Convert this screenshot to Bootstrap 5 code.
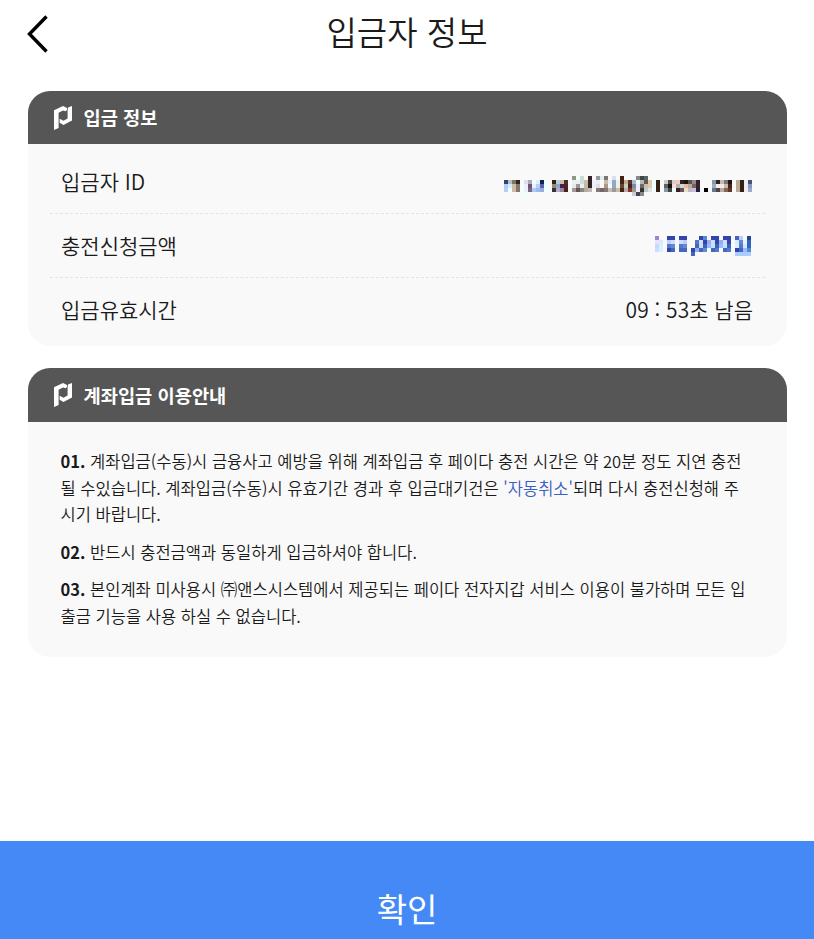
<!DOCTYPE html>
<html lang="ko">
<head>
  <meta charset="UTF-8" />
  <meta name="viewport" content="width=device-width, initial-scale=1" />
  <title>입금자 정보</title>
  <link href="https://cdn.jsdelivr.net/npm/bootstrap@5.3.3/dist/css/bootstrap.min.css" rel="stylesheet" />
  <style>
    body {
      font-family: "Noto Sans CJK KR", "Noto Sans", sans-serif;
      color: #1a1a1a;
      font-weight: 350;
    }
    .page-top {
      height: 91px;
      padding: 0 27px;
    }
    .page-title {
      font-size: 33px;
      line-height: 50px;
      padding-top: 6px;
      font-weight: 350;
    }
    .back-btn {
      width: 21px;
      padding-top: 15px;
    }
    .info-card {
      margin: 0 27px 22px 28px;
      border-radius: 22px;
      background: #f9f9f9;
    }
    .info-head {
      background: #565656;
      height: 53px;
      padding: 0 25.5px;
      font-size: 18.7px;
      font-weight: 700;
    }
    .guide-head {
      height: 54px;
    }
    .info-rows {
      padding: 5px 22px;
    }
    .info-row {
      height: 64px;
      padding: 0 12px 0 11px;
      font-size: 21px;
    }
    .info-row:first-child {
      padding-top: 2px;
    }
    .info-row + .info-row {
      border-top: 1px dashed #e4e4e4;
    }
    .guide {
      padding: 26.4px 36px 27.6px 32.5px;
      font-size: 16.53px;
      line-height: 26.5px;
      word-break: break-all;
    }
    .guide p {
      margin-bottom: 11px;
    }
    .guide strong {
      font-weight: 700;
    }
    .point {
      color: #3a5fc0;
    }
    .confirm-btn {
      background: #4589f7;
      height: 98px;
      font-size: 33px;
      line-height: 50px;
      padding-top: 36px;
    }
  </style>
</head>
<body class="bg-white vh-100 d-flex flex-column overflow-hidden">

<svg class="d-none">
  <symbol id="logo" viewBox="0 0 18 24">
    <path fill="#fff" d="M0 4.3 L9 0 L13 2 V4 L11.5 5.2 L9 4.4 L4.6 6.8 V22 L0 24 Z" />
    <path fill="#fff" d="M14 1.6 L18 0 V14.5 L9.5 19 L5.6 16.8 V12.8 L9.5 14.8 L13.6 12.4 V4 Z" />
  </symbol>
</svg>

<header class="page-top d-flex flex-shrink-0">
  <a href="#" class="back-btn" aria-label="뒤로">
    <svg class="d-block" width="21" height="38" viewBox="0 0 21 38" fill="none" stroke="#000" stroke-width="3.4">
      <path d="M19.5 1.5 L2.5 19 L19.5 36.5" />
    </svg>
  </a>
  <h1 class="page-title flex-grow-1 text-center mb-0">입금자 정보</h1>
  <span class="back-btn"></span>
</header>

<main class="flex-grow-1">
  <section class="info-card overflow-hidden">
    <div class="info-head d-flex align-items-center text-white">
      <svg class="me-2" width="18" height="24"><use href="#logo" /></svg>
      <span class="ms-1">입금 정보</span>
    </div>
    <div class="info-rows">
      <div class="info-row d-flex justify-content-between align-items-center">
        <span>입금자 ID</span>
        <svg id="maskedId" class="mt-2" width="249" height="22" viewBox="0 -1 249 22" shape-rendering="crispEdges"></svg>
      </div>
      <div class="info-row d-flex justify-content-between align-items-center">
        <span>충전신청금액</span>
        <svg id="maskedAmount" width="98" height="20" shape-rendering="crispEdges"></svg>
      </div>
      <div class="info-row d-flex justify-content-between align-items-center">
        <span>입금유효시간</span>
        <span>09 : 53초 남음</span>
      </div>
    </div>
  </section>

  <section class="info-card overflow-hidden">
    <div class="info-head guide-head d-flex align-items-center text-white">
      <svg class="me-2" width="18" height="24"><use href="#logo" /></svg>
      <span class="ms-1">계좌입금 이용안내</span>
    </div>
    <div class="guide">
      <p><strong>01.</strong> 계좌입금(수동)시 금융사고 예방을 위해 계좌입금 후 페이다 충전 시간은 약 20분 정도 지연 충전될 수있습니다. 계좌입금(수동)시 유효기간 경과 후 입금대기건은 <span class="point">'자동취소'</span>되며 다시 충전신청해 주시기 바랍니다.</p>
      <p><strong>02.</strong> 반드시 충전금액과 동일하게 입금하셔야 합니다.</p>
      <p class="mb-0"><strong>03.</strong> 본인계좌 미사용시 ㈜앤스시스템에서 제공되는 페이다 전자지갑 서비스 이용이 불가하며 모든 입출금 기능을 사용 하실 수 없습니다.</p>
    </div>
  </section>
</main>

<button type="button" class="confirm-btn btn rounded-0 border-0 w-100 flex-shrink-0 text-white fw-normal pb-0">확인</button>

<script>
  // Mosaic over private values: one 4px block per colour, "." is an empty block
  const maskedId = [
    ". . . . . . . . . . . . . . . . . 898 eff cdc . 322 . 999 dee 777 . dde . 421 . . . 888 444 566 . . . . . . . . . . . . . . . . . . . . . . . . . . .",
    "346 bbb 776 322 . dde aab eff def 125 eff . 321 bcd cba 433 . eee eee cdd cba 322 eef eee . cba eee 8ad eee 421 ca8 533 abc eff abb 655 dca eff 321 . ccc 544 dcc ecc 322 211 555 988 322 . . . 899 322 cba 778 211 . ba9 321 eee 457",
    "acf cef cba 876 eff eef 657 eef bce 56a eff . 987 8ac 425 522 . dee 999 eee bba 322 eee dde . a98 eff 9aa eee 643 ccb 422 889 eef 765 cbb dca eff 321 . 566 111 edd ca9 bde eb9 ba9 765 323 . . . 9ac eee eee cba 422 . ba9 321 eee 89b",
    "bce eff cba 876 eff eef 768 ace 9be 9ad eff . 333 bac 989 422 . a99 655 888 ba9 bbb . 877 766 877 cbb 999 cba 421 baa 832 999 eef 333 bcc edd eff 321 . 899 444 eff 322 655 edc bbc cbd 223 . 000 . 678 544 baa 865 632 . ba9 321 eee 9ac",
    ". . . . . eff . . . . . . . . . . . . . . . . . . . . . . . . . . ccc 445 888 . . . . . . . . . . . . . . . . . . . . . . . . . . ."
  ];
  const maskedAmount = [
    "98c . . 34a 34a . 34a 34a . . . 34a 58d . 34a 34a . 34a 34a . 46b bcf . 249",
    "edf cef . bcf cdf . cdf bcf . . 57b cdf 34a 9ae cdf 34a 9ae cdf 34a . cef 68c eef 36b",
    "bdf def . 57c 68c . 57c 68c . . 46b cdf 36b 9bf cdf 36b 9bf cdf 36b . def 57c cef 36b",
    "cdf def . 34a 46b . 46b 46b . 34a 9ae 46b 68c . 46b 57c . 46b 57c . 34a 46b 9bf 58c",
    ". . . . . . . . . 46b . . . . . . . . . . acf acf acf acf"
  ];

  function drawMosaic(id, rows) {
    const cell = 4;
    let html = '';
    rows.forEach((row, y) => {
      row.split(' ').forEach((c, x) => {
        if (c === '.') return;
        html += `<rect x="${x * cell}" y="${y * cell}" width="${cell}" height="${cell}" fill="#${c}" />`;
      });
    });
    document.getElementById(id).innerHTML = html;
  }

  drawMosaic('maskedId', maskedId);
  drawMosaic('maskedAmount', maskedAmount);
</script>
<script src="https://cdn.jsdelivr.net/npm/bootstrap@5.3.3/dist/js/bootstrap.bundle.min.js"></script>
</body>
</html>
